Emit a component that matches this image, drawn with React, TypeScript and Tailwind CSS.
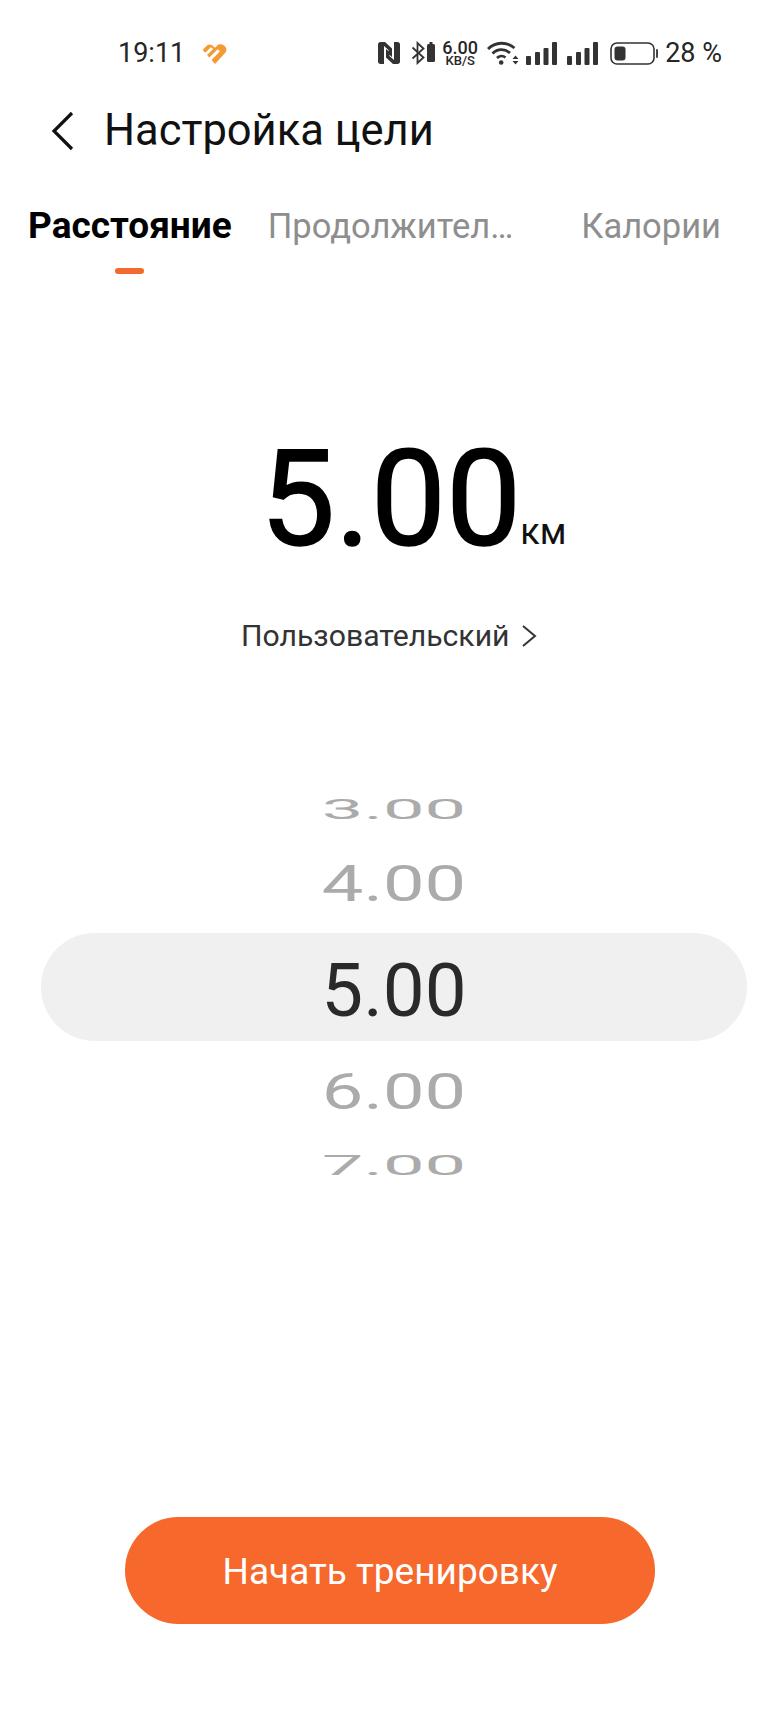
const font = { fontFamily: "Roboto, sans-serif" };

function HeartLogo() {
  return (
    <svg width="26" height="22" viewBox="0 0 26 22" fill="none">
      <path d="M1 6.5 L5 2.5 C6.5 1 8.8 1 10.5 2.5 L13 4.7 L15 2.7 C16.8 .9 19.8 .9 22 2.4 C25 4.4 25 8 23 10 L13 21 L9.5 17 L18 8.2 L15.7 6.2 L7.3 14.6 L5 12 L11.2 6 L8.8 4.2 L3.6 9.6 C2 9 .7 7.6 1 6.5 Z" fill="#f59a33" />
    </svg>
  );
}

function NfcIcon() {
  return (
    <svg width="22" height="22" viewBox="0 0 22 22" fill="#333">
      <path d="M0 2.5 C0 1 1 0 2.5 0 H7 L14 6.5 V15 L10.5 12 V8 L6 4 V22 H2.5 C1 22 0 21 0 19.5 Z" />
      <path d="M22 19.5 C22 21 21 22 19.5 22 H15 L8 15.5 V7 L11.5 10 V14 L16 18 V0 H19.5 C21 0 22 1 22 2.5 Z" />
    </svg>
  );
}

function BluetoothIcon() {
  return (
    <svg width="24" height="24" viewBox="0 0 24 24" fill="none">
      <path d="M1.5 6.5 L12.5 16.5 L6.5 22 V2 L12.5 7.5 L1.5 17.5" stroke="#333" strokeWidth="1.8" />
      <rect x="16" y="3" width="8" height="18" rx="1.5" fill="#333" />
      <rect x="18.5" y="1" width="3" height="3" fill="#333" />
    </svg>
  );
}

function WifiIcon() {
  return (
    <svg width="32" height="24" viewBox="0 0 32 24" fill="none">
      <path d="M1 8 C8.5 .5 20 .5 27.5 7" stroke="#333" strokeWidth="2.8" />
      <path d="M5.5 12.5 C10.5 7.5 18 7.5 23 12" stroke="#333" strokeWidth="2.8" />
      <path d="M10 17 C12.5 14.5 16 14.5 18.5 16.5" stroke="#333" strokeWidth="2.8" />
      <circle cx="14.2" cy="21.5" r="2.3" fill="#333" />
      <path d="M25.5 18 L28.5 14.5 L31.5 18 Z M25.5 20 H31.5 L28.5 23.5 Z" fill="#333" />
    </svg>
  );
}

function SignalIcon() {
  return (
    <svg width="31" height="23" viewBox="0 0 31 23" fill="#333">
      <rect x="0" y="14" width="5" height="9" rx="1" />
      <rect x="9" y="10" width="5" height="13" rx="1" />
      <rect x="17.5" y="6" width="5" height="17" rx="1" />
      <rect x="26" y="0" width="5" height="23" rx="1" />
    </svg>
  );
}

function BatteryIcon() {
  return (
    <svg width="49" height="23" viewBox="0 0 49 23" fill="none">
      <rect x="1" y="1" width="43" height="21" rx="6" stroke="#333" strokeWidth="1.6" />
      <rect x="4.5" y="4.5" width="11" height="14" rx="3" fill="#333" />
      <path d="M47 8 V15" stroke="#333" strokeWidth="1.8" strokeLinecap="round" />
    </svg>
  );
}

function StatusBar() {
  return (
    <div className="flex h-[70px] items-end pb-[1px] pl-[118px] pr-[58px] text-[#262626]">
      <span className="text-[27px] leading-[32px]">19:11</span>
      <span className="ml-[17px] mb-[4px]"><HeartLogo /></span>
      <div className="ml-auto flex items-center">
        <NfcIcon />
        <span className="ml-[11px]"><BluetoothIcon /></span>
        <div className="ml-[7px] flex w-[36px] flex-col items-center">
          <span className="text-[18px] leading-[15px] font-medium">6.00</span>
          <span className="text-[13px] leading-[11px] font-medium">KB/S</span>
        </div>
        <span className="ml-[9px]"><WifiIcon /></span>
        <span className="ml-[7px]"><SignalIcon /></span>
        <span className="ml-[10px]"><SignalIcon /></span>
        <span className="ml-[12px]"><BatteryIcon /></span>
        <span className="ml-[6px] text-[27px] leading-[32px]">28 %</span>
      </div>
    </div>
  );
}

function Wheel({ value, scale, height }: { value: string; scale: string; height: string }) {
  return (
    <div className={`flex w-full items-center justify-center ${height}`}>
      <span className={`text-[74px] leading-none text-[#ababab] ${scale}`}>{value}</span>
    </div>
  );
}

export default function App() {
  return (
    <div className="flex h-[1733px] w-[780px] flex-col bg-white" style={font}>
      <StatusBar />

      <div className="mt-[31px] flex h-[60px] items-center pl-[50px]">
        <svg width="24" height="40" viewBox="0 0 24 40" fill="none">
          <path d="M22 2 L4 20 L22 38" stroke="#111" strokeWidth="3.2" />
        </svg>
        <h1 className="ml-[30px] text-[43.5px] leading-none text-[#111]">Настройка цели</h1>
      </div>

      <div className="relative mt-[41px] h-[58px] text-[34.5px] leading-[48px]">
        <div className="flex items-center">
          <span className="ml-[28px] text-[37px] font-bold text-black">Расстояние</span>
          <span className="ml-[36px] text-[#8e8e8e]">Продолжител…</span>
          <span className="ml-auto mr-[59px] text-[#8e8e8e]">Калории</span>
        </div>
        <div className="absolute left-[115px] top-[66px] h-[6px] w-[29px] rounded-full bg-[#f26a2e]" />
      </div>

      <div className="mt-[180px] flex h-[120px] items-end pl-[260px]">
        <span className="text-[134px] leading-[120px] text-black [-webkit-text-stroke:1.5px_#000]">5.00</span>
        <span className="mb-[10px] ml-[-1px] text-[36px] leading-[36px] text-[#111]">км</span>
      </div>

      <div className="mt-[56px] flex items-center pl-[241px] text-[#333]">
        <span className="text-[30.2px] leading-[40px]">Пользовательский</span>
        <svg className="ml-[11px]" width="16" height="24" viewBox="0 0 16 24" fill="none">
          <path d="M2 2 L14 12 L2 22" stroke="#333" strokeWidth="2" />
        </svg>
      </div>

      <div className="mt-[127px] ml-[41px] flex w-[706px] flex-col items-center">
        <Wheel value="3.00" scale="scale-y-[0.38]" height="h-[52px]" />
        <Wheel value="4.00" scale="scale-y-[0.68]" height="h-[98px]" />
        <div className="flex h-[108px] w-full items-center justify-center rounded-full bg-[#f0f0f0] pt-[9px]">
          <span className="text-[74.5px] leading-none text-[#2a2a2a]">5.00</span>
        </div>
        <Wheel value="6.00" scale="scale-y-[0.68]" height="h-[102px]" />
        <Wheel value="7.00" scale="scale-y-[0.38]" height="h-[46px]" />
      </div>

      <div className="mt-auto mb-[109px] flex justify-center">
        <button className="h-[107px] w-[530px] rounded-full bg-[#f6682b] pt-[3px] text-[37px] text-white">Начать тренировку</button>
      </div>
    </div>
  );
}
